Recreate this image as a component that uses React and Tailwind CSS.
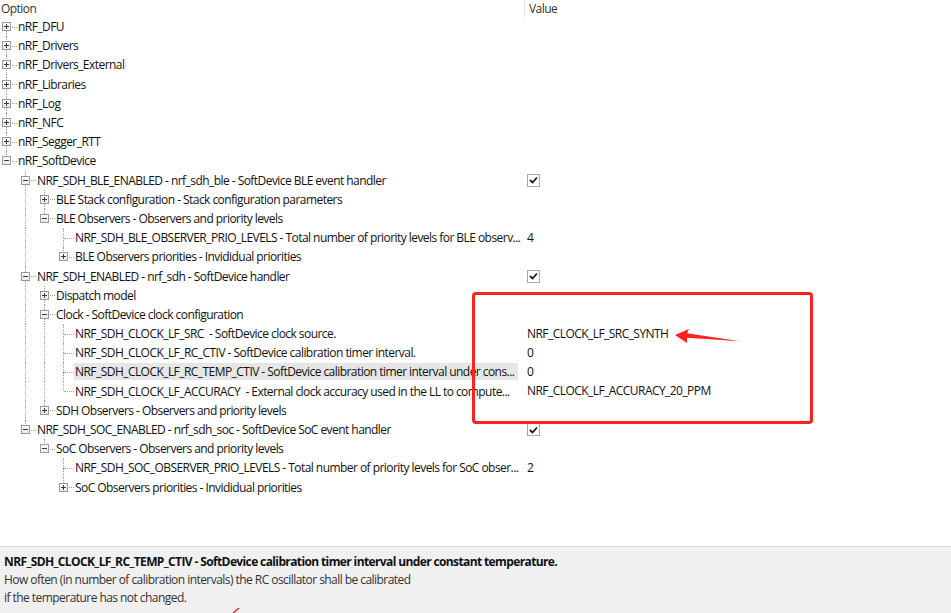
import React from 'react';

const rows = [
  { l: 0, t: 'plus', label: 'nRF_DFU' },
  { l: 0, t: 'plus', label: 'nRF_Drivers' },
  { l: 0, t: 'plus', label: 'nRF_Drivers_External' },
  { l: 0, t: 'plus', label: 'nRF_Libraries' },
  { l: 0, t: 'plus', label: 'nRF_Log' },
  { l: 0, t: 'plus', label: 'nRF_NFC' },
  { l: 0, t: 'plus', label: 'nRF_Segger_RTT' },
  { l: 0, t: 'minus', label: 'nRF_SoftDevice' },
  { l: 1, t: 'minus', label: 'NRF_SDH_BLE_ENABLED - nrf_sdh_ble - SoftDevice BLE event handler', check: true },
  { l: 2, t: 'plus', label: 'BLE Stack configuration - Stack configuration parameters' },
  { l: 2, t: 'minus', label: 'BLE Observers - Observers and priority levels' },
  { l: 3, t: 'leaf', label: 'NRF_SDH_BLE_OBSERVER_PRIO_LEVELS - Total number of priority levels for BLE observ...', value: '4' },
  { l: 3, t: 'plus', label: 'BLE Observers priorities - Invididual priorities' },
  { l: 1, t: 'minus', label: 'NRF_SDH_ENABLED - nrf_sdh - SoftDevice handler', check: true },
  { l: 2, t: 'plus', label: 'Dispatch model' },
  { l: 2, t: 'minus', label: 'Clock - SoftDevice clock configuration' },
  { l: 3, t: 'leaf', label: 'NRF_SDH_CLOCK_LF_SRC\u00a0 - SoftDevice clock source.', value: 'NRF_CLOCK_LF_SRC_SYNTH' },
  { l: 3, t: 'leaf', label: 'NRF_SDH_CLOCK_LF_RC_CTIV - SoftDevice calibration timer interval.', value: '0' },
  { l: 3, t: 'leaf', label: 'NRF_SDH_CLOCK_LF_RC_TEMP_CTIV - SoftDevice calibration timer interval under cons...', value: '0', selected: true },
  { l: 3, t: 'leaf', label: 'NRF_SDH_CLOCK_LF_ACCURACY\u00a0 - External clock accuracy used in the LL to compute...', value: 'NRF_CLOCK_LF_ACCURACY_20_PPM' },
  { l: 2, t: 'plus', label: 'SDH Observers - Observers and priority levels' },
  { l: 1, t: 'minus', label: 'NRF_SDH_SOC_ENABLED - nrf_sdh_soc - SoftDevice SoC event handler', check: true },
  { l: 2, t: 'minus', label: 'SoC Observers - Observers and priority levels' },
  { l: 3, t: 'leaf', label: 'NRF_SDH_SOC_OBSERVER_PRIO_LEVELS - Total number of priority levels for SoC obser...', value: '2' },
  { l: 3, t: 'plus', label: 'SoC Observers priorities - Invididual priorities' },
];

// does level `lvl` continue below row r (a later sibling exists)?
function continues(r, lvl) {
  for (let j = r + 1; j < rows.length; j++) {
    if (rows[j].l < lvl) return false;
    if (rows[j].l === lvl) return true;
  }
  return false;
}

const dots = 'absolute border-dotted border-[#a0a0a0]';

function Expander({ type }) {
  return (
    <div className="absolute left-[2px] top-[calc(50%-4.5px)] w-[9px] h-[9px] border border-[#9a9a9a] bg-gradient-to-b from-white to-[#e8e8e8] flex items-center justify-center">
      <div className="relative w-[5px] h-[5px]">
        <div className="absolute left-0 right-0 top-[2px] h-px bg-[#3a3a3a]" />
        {type === 'plus' && <div className="absolute top-0 bottom-0 left-[2px] w-px bg-[#3a3a3a]" />}
      </div>
    </div>
  );
}

function CheckBox() {
  return (
    <div className="w-[13px] h-[13px] border border-[#a8a8a8] bg-white flex items-center justify-center">
      <svg width="9" height="8" viewBox="0 0 9 8">
        <path d="M1 4 L3.5 6.5 L8 1.5" fill="none" stroke="#1a1a1a" strokeWidth="1.8" />
      </svg>
    </div>
  );
}

function Row({ row, idx }) {
  const guides = [];
  for (let i = 0; i < row.l; i++) {
    guides.push(
      <div key={i} className="relative w-[19px] h-full shrink-0">
        {continues(idx, i) && <div className={`${dots} left-[6px] top-0 bottom-0 border-l`} />}
      </div>
    );
  }
  return (
    <div className="flex h-[19.2px] items-center">
      <div className="w-[524px] h-full flex shrink-0 overflow-hidden">
        {guides}
        <div className="relative w-[17px] h-full shrink-0">
          {idx > 0 && <div className={`${dots} left-[6px] top-0 h-1/2 border-l`} />}
          {continues(idx, row.l) && <div className={`${dots} left-[6px] top-1/2 bottom-0 border-l`} />}
          <div className={`${dots} left-[7px] right-0 top-1/2 border-t`} />
          {row.t !== 'leaf' && <Expander type={row.t} />}
        </div>
        <div className="flex items-center min-w-0">
          <span
            className={`whitespace-nowrap px-[1px] h-[17px] leading-[17px] ${row.selected ? 'bg-[#e6e6e6] pr-[4px]' : ''}`}
          >
            {row.label}
          </span>
        </div>
      </div>
      <div className="pl-[3px] whitespace-nowrap">
        {row.check ? <CheckBox /> : row.value}
      </div>
    </div>
  );
}

export default function App() {
  return (
    <div className="relative w-[951px] h-[613px] bg-white overflow-hidden text-[12px] text-[#111] font-['Open_Sans',sans-serif] tracking-[-0.55px] flex flex-col">
      <div className="flex h-[17px] items-center text-[#333]">
        <div className="w-[524px] pl-[1px] shrink-0">Option</div>
        <div className="h-full w-px bg-[#e3e3e3]" />
        <div className="pl-[4px]">Value</div>
      </div>

      <div className="flex flex-col">
        {rows.map((row, i) => (
          <Row key={i} row={row} idx={i} />
        ))}
      </div>

      <div className="flex-1" />

      <div className="h-[67px] shrink-0 border-t border-[#d6d6d6] bg-[#f0f0f0] px-[4px] pt-[6px] leading-[18px] text-[#333]">
        <div className="font-bold text-[#111] tracking-[-0.62px]">
          NRF_SDH_CLOCK_LF_RC_TEMP_CTIV - SoftDevice calibration timer interval under constant temperature.
        </div>
        <div>How often (in number of calibration intervals) the RC oscillator shall be calibrated</div>
        <div>if the temperature has not changed.</div>
      </div>

      {/* annotation overlay */}
      <div className="absolute left-[472px] top-[292px] w-[341px] h-[132px] border-[3px] border-[#fb2222] rounded-[4px]" />
      <svg className="absolute left-[670px] top-[325px]" width="75" height="22" viewBox="0 0 75 22">
        <polygon points="5,10 19,4 17,8.3 70,16.3 17,12.8 17,18" fill="#fb2222" />
      </svg>
      <svg className="absolute left-[228px] top-[604px]" width="14" height="9" viewBox="0 0 14 9">
        <path d="M5 9 L11 4" stroke="#fb2222" strokeWidth="1.5" />
      </svg>
    </div>
  );
}
